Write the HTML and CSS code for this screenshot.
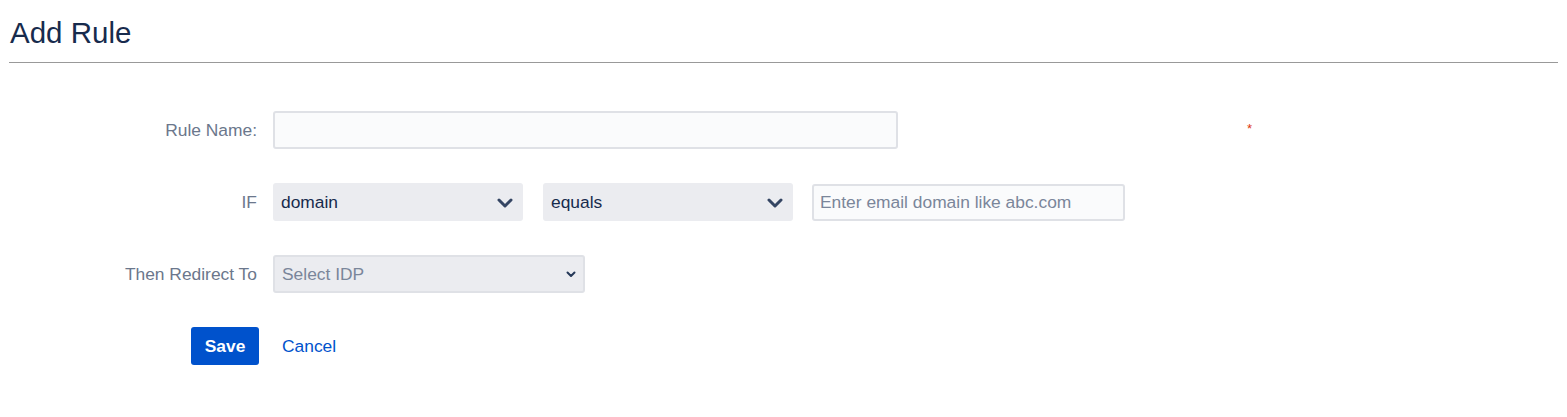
FILE: index.html
```html
<!DOCTYPE html>
<html lang="en">
  <head>
    <meta charset="UTF-8" />
    <title>Add Rule</title>
    <link rel="stylesheet" href="styles.css">
  </head>
  <body>
    <div class="page">
      <h1 class="title">Add Rule</h1>
      <hr class="divider" />
      <form class="rule-form">
        <div class="form-row">
          <label class="form-label">Rule Name:</label>
          <div class="form-field">
            <input class="text-input name-input" type="text" />
            <span class="required">*</span>
          </div>
        </div>
        <div class="form-row">
          <label class="form-label">IF</label>
          <div class="form-field">
            <div class="select-box">
              <span>domain</span>
              <svg class="chevron" width="16" height="10" viewBox="0 0 16 10"><path d="M2 2l6 6 6-6" fill="none" stroke="#344563" stroke-width="3" stroke-linecap="round" stroke-linejoin="round"/></svg>
            </div>
            <div class="select-box">
              <span>equals</span>
              <svg class="chevron" width="16" height="10" viewBox="0 0 16 10"><path d="M2 2l6 6 6-6" fill="none" stroke="#344563" stroke-width="3" stroke-linecap="round" stroke-linejoin="round"/></svg>
            </div>
            <input class="text-input domain-input" type="text" placeholder="Enter email domain like abc.com" />
          </div>
        </div>
        <div class="form-row">
          <label class="form-label">Then Redirect To</label>
          <div class="form-field">
            <div class="select-box idp-select">
              <span>Select IDP</span>
              <svg class="chevron-sm" width="10" height="7" viewBox="0 0 10 7"><path d="M1.5 1.5l3.5 3.5 3.5-3.5" fill="none" stroke="#253858" stroke-width="2" stroke-linecap="round" stroke-linejoin="round"/></svg>
            </div>
          </div>
        </div>
        <div class="form-row actions">
          <div class="form-label">
            <button class="btn-save" type="button">Save</button>
          </div>
          <div class="form-field">
            <a class="cancel-link" href="#">Cancel</a>
          </div>
        </div>
      </form>
    </div>
  </body>
</html>
```

FILE: styles.css
```css
/* Базовые стили */
* {
  margin: 0;
  padding: 0;
  box-sizing: border-box;
}

body {
  font-family: "Liberation Sans", Arial, sans-serif;
  background-color: #fff;
  color: #172b4d;
}

.page {
  padding: 0 9px 0 9px;
}

.title {
  font-size: 29.5px;
  font-weight: normal;
  line-height: 34px;
  padding-top: 16px;
  padding-left: 1px;
  color: #172b4d;
}

.divider {
  border: none;
  border-top: 1px solid #999;
  margin-top: 12px;
  width: 1549px;
}

.rule-form {
  margin-top: 48px;
  display: flex;
  flex-direction: column;
  gap: 34px;
}

.form-row {
  display: grid;
  grid-template-columns: 248px 1fr;
  column-gap: 16px;
  align-items: center;
  height: 38px;
}

.form-label {
  text-align: right;
  font-size: 17.4px;
  color: #6b778c;
}

.form-field {
  display: flex;
  align-items: center;
  gap: 20px;
}

.text-input {
  height: 38px;
  border: 2px solid #dfe1e6;
  border-radius: 3px;
  background-color: #fafbfc;
  font-family: inherit;
  font-size: 17.4px;
  color: #172b4d;
  padding: 0 6px;
  outline: none;
}

.text-input::placeholder {
  color: #7a869a;
}

.name-input {
  width: 625px;
}

.required {
  color: #de350b;
  font-size: 13px;
  margin-left: 329px;
  margin-top: -3px;
}

.domain-input {
  width: 313px;
  height: 37px;
  margin-left: -1px;
}

.select-box {
  width: 250px;
  height: 38px;
  background-color: #ebecf0;
  border-radius: 3px;
  display: flex;
  align-items: center;
  justify-content: space-between;
  padding: 0 10px 0 8px;
  font-size: 17.4px;
  color: #172b4d;
}

.chevron {
  margin-top: 1px;
}

.idp-select {
  width: 312px;
  border: 2px solid #dfe1e6;
  padding: 0 7px 0 7px;
  color: #7a869a;
}

.btn-save {
  width: 68px;
  height: 38px;
  margin-right: -2px;
  background-color: #0052cc;
  color: #fff;
  border: none;
  border-radius: 3px;
  font-family: inherit;
  font-size: 17.4px;
  font-weight: bold;
}

.cancel-link {
  margin-left: 9px;
  font-size: 17.4px;
  color: #0052cc;
  text-decoration: none;
}
```
